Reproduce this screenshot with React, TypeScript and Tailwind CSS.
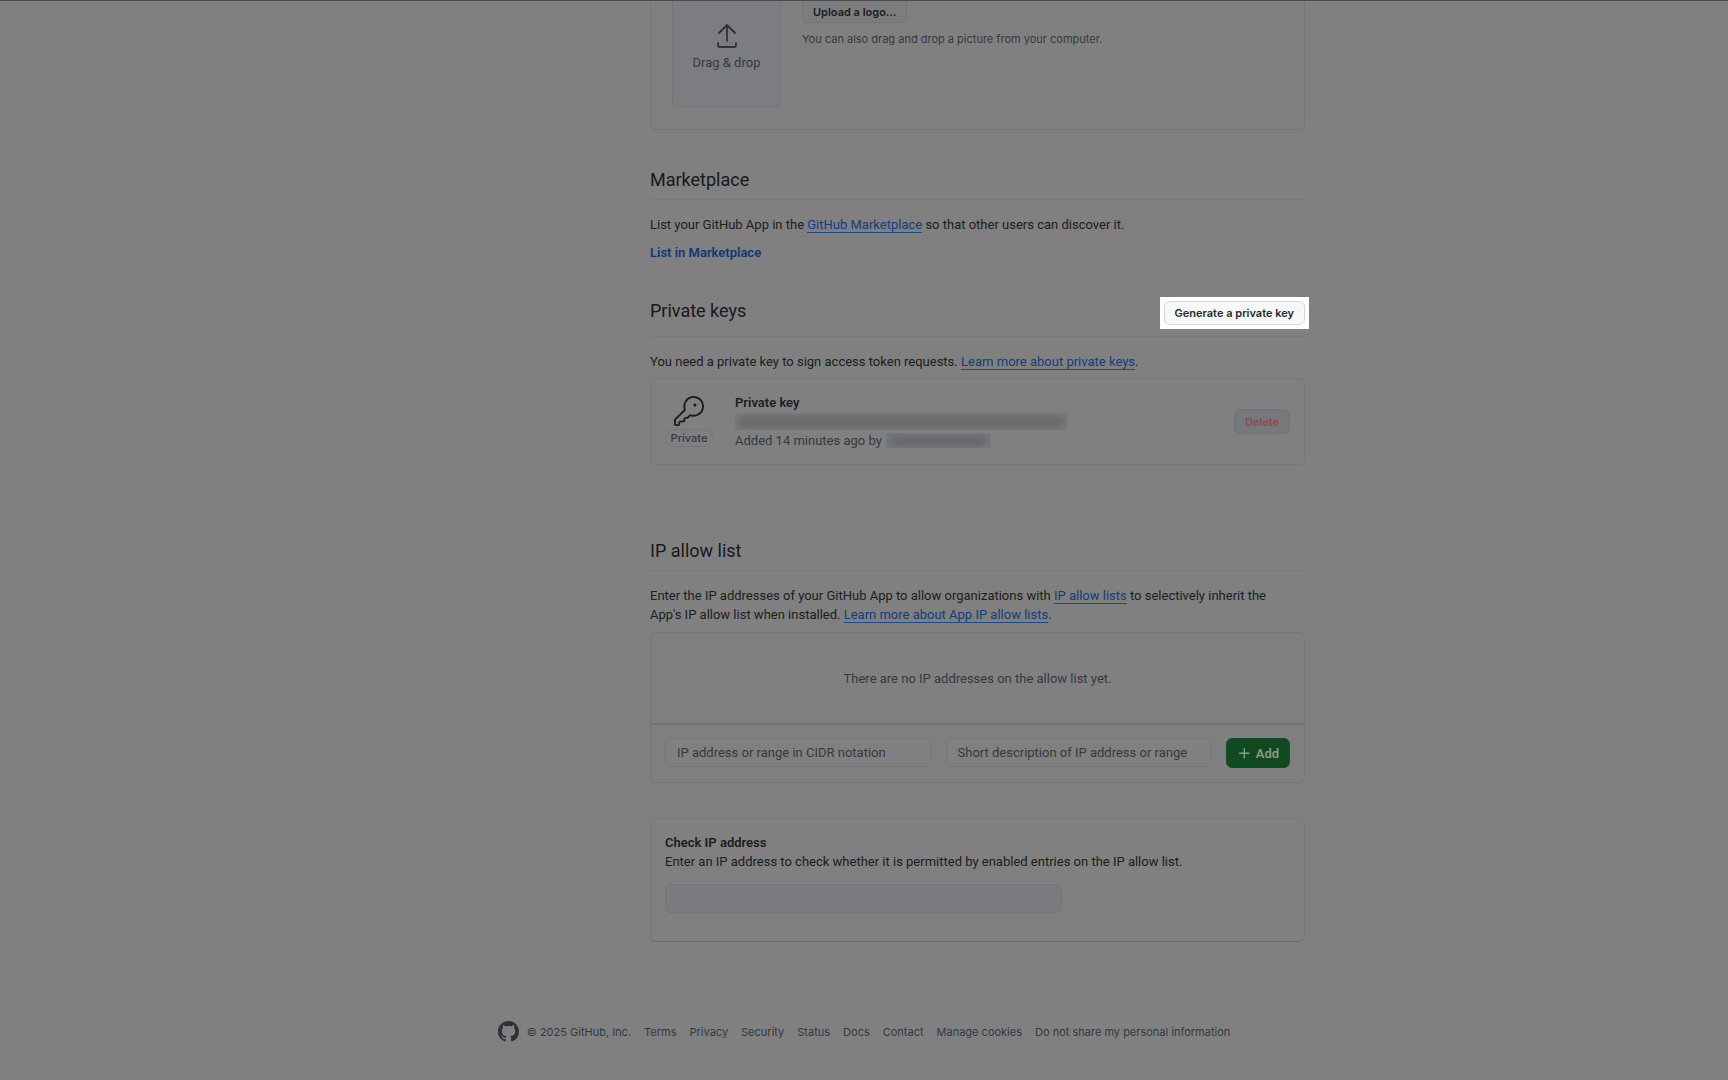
import React from "react";

const links = ["Terms", "Privacy", "Security", "Status", "Docs", "Contact", "Manage cookies", "Do not share my personal information"];

function TextLink({ children }: { children: React.ReactNode }) {
  return (
    <a href="#" className="border-b border-[#1c4b8c] text-[#123e7c]">
      {children}
    </a>
  );
}

function SectionTitle({ children, action }: { children: React.ReactNode; action?: React.ReactNode }) {
  return (
    <div className="flex items-start justify-between border-b border-[#787a7c]">
      <h2 className="pb-[5px] text-[18px] leading-[28px] text-[#17191c]">{children}</h2>
      {action}
    </div>
  );
}

function UploadIcon() {
  return (
    <svg width="22" height="26" viewBox="0 0 22 26" fill="none" stroke="#2f3338" strokeWidth="1.8" strokeLinecap="round" strokeLinejoin="round" aria-hidden="true">
      <path d="M11 18V2M3 10l8-8 8 8M2 20v2.500c0 .8.6 1.500 1.500 1.500h15c.9 0 1.500-.7 1.500-1.500V20" />
    </svg>
  );
}

function KeyIcon() {
  return (
    <svg width="30" height="30" viewBox="0 0 24 24" fill="#1b1d20" aria-hidden="true">
      <path d="M16.75 8.5a1.25 1.25 0 1 0 0-2.5 1.25 1.25 0 0 0 0 2.5Z" />
      <path d="M15.75 0a8.25 8.25 0 1 1-2.541 16.101l-1.636 1.636a1.744 1.744 0 0 1-1.237.513H9.25a.25.25 0 0 0-.25.25v1.448a.876.876 0 0 1-.256.619l-.214.213a.75.75 0 0 1-.545.22H5.25a.25.25 0 0 0-.25.25v1A1.75 1.75 0 0 1 3.25 24h-1.5A1.75 1.75 0 0 1 0 22.25v-2.836c0-.464.185-.908.513-1.236l7.386-7.388A8.249 8.249 0 0 1 15.75 0ZM9 8.25a6.733 6.733 0 0 0 .463 2.462.75.75 0 0 1-.168.804l-7.722 7.721a.25.25 0 0 0-.073.177v2.836c0 .138.112.25.25.25h1.5a.25.25 0 0 0 .25-.25v-1c0-.966.784-1.75 1.75-1.75H7.5v-1c0-.966.784-1.75 1.75-1.75h1.086a.25.25 0 0 0 .177-.073l1.971-1.972a.75.75 0 0 1 .804-.168A6.75 6.75 0 1 0 9 8.25Z" />
    </svg>
  );
}

function GitHubMark() {
  return (
    <svg width="21" height="21" viewBox="0 0 16 16" fill="#2d3238" aria-hidden="true">
      <path d="M8 0c4.42 0 8 3.58 8 8a8.013 8.013 0 0 1-5.45 7.59c-.4.08-.55-.17-.55-.38 0-.27.01-1.13.01-2.2 0-.75-.25-1.23-.54-1.48 1.78-.2 3.65-.88 3.65-3.95 0-.88-.31-1.59-.82-2.15.08-.2.36-1.02-.08-2.12 0 0-.67-.22-2.2.82-.64-.18-1.32-.27-2-.27-.68 0-1.36.09-2 .27-1.53-1.03-2.2-.82-2.2-.82-.44 1.1-.16 1.92-.08 2.12-.51.56-.82 1.28-.82 2.15 0 3.06 1.86 3.75 3.64 3.95-.23.2-.44.55-.51 1.07-.46.21-1.61.55-2.33-.66-.15-.24-.6-.83-1.23-.82-.67.01-.27.38.01.53.34.19.73.9.82 1.13.16.45.68 1.31 2.69.94 0 .67.01 1.3.01 1.49 0 .21-.15.45-.55.38A7.995 7.995 0 0 1 0 8c0-4.42 3.58-8 8-8Z" />
    </svg>
  );
}

export default function App() {
  return (
    <div className="min-h-screen border-t border-[#4a4a4c] bg-[#808080] font-['Roboto',sans-serif] text-[13px] leading-[19px] text-[#1b1d20]">
      <main className="mx-auto max-w-[882px] pl-[227px]">
        <section className="flex gap-[21px] rounded-b-md border border-t-0 border-[#757779] px-[21px] pb-[22px]">
          <div className="flex h-[106px] w-[109px] flex-col items-center rounded-b-md border border-t-0 border-[#72767b] bg-[#7b7d80] pt-[22px] text-[#34393f]">
            <UploadIcon />
            <span className="mt-1">Drag &amp; drop</span>
          </div>
          <div className="font-['Inter',sans-serif] text-[11px] leading-[16px]">
            <button className="block h-[22px] rounded-b-md border border-t-0 border-[#727579] bg-[#7b7d7f] px-[10px] font-semibold">Upload a logo...</button>
            <p className="mt-2 text-[#34393f]">You can also drag and drop a picture from your computer.</p>
          </div>
        </section>

        <section className="mt-9">
          <SectionTitle>
            Marketplace
          </SectionTitle>
          <p className="mt-[15px]">
            List your GitHub App in the <TextLink>GitHub Marketplace</TextLink> so that other users can discover it.
          </p>
          <a href="#" className="mt-[9px] block w-fit font-semibold text-[#0b3a78]">List in Marketplace</a>
        </section>

        <section className="mt-[35px]">
          <SectionTitle
            action={
              <div className="-mr-1 mb-[7px] bg-white p-1">
                <button className="block h-6 rounded-md border border-[#d1d9e0] bg-[#f6f8fa] px-[10px] font-['Inter',sans-serif] text-[11px] leading-[16px] font-semibold text-[#25292e]">
                  Generate a private key
                </button>
              </div>
            }
          >
            Private keys
          </SectionTitle>
          <p className="mt-[15px]">
            You need a private key to sign access token requests. <TextLink>Learn more about private keys</TextLink>.
          </p>
          <div className="mt-[7px] flex h-[87px] items-center rounded-md border border-[#757779] px-[14px]">
            <div className="flex w-12 flex-col items-center">
              <KeyIcon />
              <span className="mt-[3px] rounded-full border border-[#747678] px-[5px] font-['Inter',sans-serif] text-[11px] leading-[16px] font-medium text-[#34393f]">Private</span>
            </div>
            <div className="ml-[22px] grow text-[#34393f]">
              <h3 className="font-semibold text-[#1b1d20]">Private key</h3>
              <div className="h-[19px] w-[332px] py-px">
                <div className="h-[17px] overflow-hidden bg-[#7b7b7c] pt-[5px]">
                  <div className="mx-1 h-[8px] bg-[#5f6163] blur-xs" />
                </div>
              </div>
              <div className="flex items-center gap-1">
                <span>Added 14 minutes ago by</span>
                <span className="block h-[15px] w-[105px] overflow-hidden bg-[#7a7b7d] pt-1">
                  <span className="mx-1 block h-[8px] bg-[#5d6166] blur-xs" />
                </span>
              </div>
            </div>
            <button disabled className="h-[25px] rounded-md border border-[#6f7377] bg-[#76797c] px-[10px] font-['Inter',sans-serif] text-[11px] leading-[16px] font-semibold text-[#8a4c51]">Delete</button>
          </div>
        </section>

        <section className="mt-[72px]">
          <SectionTitle>
            IP allow list
          </SectionTitle>
          <p className="mt-[15px] pr-5">
            Enter the IP addresses of your GitHub App to allow organizations with <TextLink>IP allow lists</TextLink> to selectively inherit the App's IP allow list when installed. <TextLink>Learn more about App IP allow lists</TextLink>.
          </p>
          <div className="mt-2 rounded-md border border-[#757779]">
            <p className="border-b-2 border-[#6e7276] pt-9 pb-[35px] text-center text-[#34393f]">There are no IP addresses on the allow list yet.</p>
            <form className="flex gap-[14px] px-[14px] pt-[13px] pb-[14px]">
              <input aria-label="IP address or range" placeholder="IP address or range in CIDR notation" className="h-[29px] min-w-0 flex-1 rounded-md border border-[#747678] px-[11px] placeholder:text-[#34393f]" />
              <input aria-label="Description" placeholder="Short description of IP address or range" className="h-[29px] min-w-0 flex-1 rounded-md border border-[#747678] px-[11px] placeholder:text-[#34393f]" />
              <button type="button" className="flex h-[30px] w-16 items-center justify-center gap-1 rounded-md border border-[#134f25] bg-[#104a20] font-semibold text-[#8d9a90]">
                <svg width="15" height="15" viewBox="0 0 16 16" fill="currentColor" aria-hidden="true">
                  <path d="M7.75 2a.75.75 0 0 1 .75.75V7h4.25a.75.75 0 0 1 0 1.500H8.500v4.250a.75.75 0 0 1-1.500 0V8.500H2.750a.75.75 0 0 1 0-1.500H7V2.750A.75.75 0 0 1 7.750 2Z" />
                </svg>
                Add
              </button>
            </form>
          </div>
          <div className="mt-[35px] rounded-md border border-[#757779] border-b-[#6b6f70] px-[14px] pt-[14px] pb-7">
            <label htmlFor="check-ip" className="block font-semibold">Check IP address</label>
            <p>Enter an IP address to check whether it is permitted by enabled entries on the IP allow list.</p>
            <input id="check-ip" disabled className="mt-[13px] block h-[29px] w-[397px] rounded-md border border-[#727578] bg-[#797b7e]" />
          </div>
        </section>
      </main>

      <footer className="mt-[79px] flex items-center justify-center pb-9 font-['Inter',sans-serif] text-[11px] leading-[16px] text-[#34393f]">
        <GitHubMark />
        <span className="ml-2">© 2025 GitHub, Inc.</span>
        {links.map((label) => (
          <a key={label} href="#" className="ml-[13px]">{label}</a>
        ))}
      </footer>
    </div>
  );
}
